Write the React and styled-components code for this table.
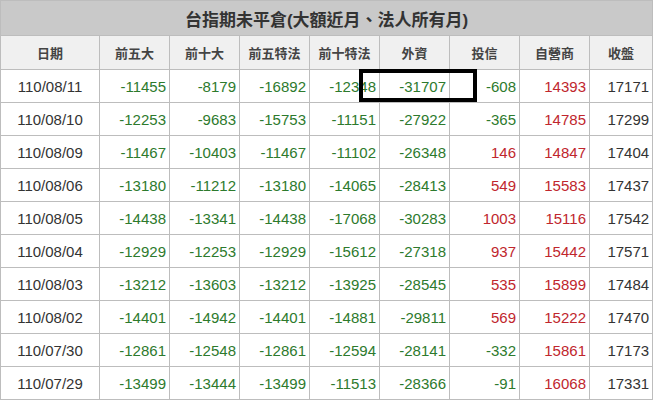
import styled, { createGlobalStyle } from "styled-components";

const GlobalStyle = createGlobalStyle`
  html, body {
    margin: 0;
    padding: 0;
    background: #ffffff;
    font-family: "Liberation Sans", "Noto Sans CJK TC", Arial, sans-serif;
  }
`;

const Wrap = styled.div`
  position: relative;
  width: 652px;
`;

const Table = styled.table`
  width: 652px;
  border-collapse: collapse;
  table-layout: fixed;
`;

const TitleCell = styled.th`
  height: 34px;
  padding: 0;
  background: #c9c9c9;
  border: 1px solid #bdbdbd;
  color: #333;
  font-size: 17px;
  font-weight: bold;
  text-align: center;
  font-family: "Liberation Sans", "Noto Sans CJK TC", sans-serif;
`;

const HeadCell = styled.th`
  height: 33px;
  padding: 0;
  background: #f0f0f0;
  border: 1px solid #bdbdbd;
  color: #444;
  font-size: 13px;
  font-weight: bold;
  text-align: center;
  font-family: "Noto Sans CJK TC", sans-serif;
`;

const Cell = styled.td`
  height: 32px;
  padding: 0 3px;
  border: 1px solid #bdbdbd;
  font-size: 15px;
  text-align: ${(p) => (p.$center ? "center" : "right")};
  color: ${(p) => p.$color || "#333"};
  white-space: nowrap;
  overflow: hidden;
`;

const Mark = styled.div`
  position: absolute;
  left: 359px;
  top: 69px;
  width: 118px;
  height: 33px;
  box-sizing: border-box;
  border: 4px solid #000;
  pointer-events: none;
`;

const widths = [99, 70, 70, 70, 70, 70, 70, 70, 63];
const heads = ["日期", "前五大", "前十大", "前五特法", "前十特法", "外資", "投信", "自營商", "收盤"];

const rows = [
  ["110/08/11", -11455, -8179, -16892, -12348, -31707, -608, 14393, 17171],
  ["110/08/10", -12253, -9683, -15753, -11151, -27922, -365, 14785, 17299],
  ["110/08/09", -11467, -10403, -11467, -11102, -26348, 146, 14847, 17404],
  ["110/08/06", -13180, -11212, -13180, -14065, -28413, 549, 15583, 17437],
  ["110/08/05", -14438, -13341, -14438, -17068, -30283, 1003, 15116, 17542],
  ["110/08/04", -12929, -12253, -12929, -15612, -27318, 937, 15442, 17571],
  ["110/08/03", -13212, -13603, -13212, -13925, -28545, 535, 15899, 17484],
  ["110/08/02", -14401, -14942, -14401, -14881, -29811, 569, 15222, 17470],
  ["110/07/30", -12861, -12548, -12861, -12594, -28141, -332, 15861, 17173],
  ["110/07/29", -13499, -13444, -13499, -11513, -28366, -91, 16068, 17331],
];

const tone = (v, i) => {
  if (i === 8) return "#333";
  return v < 0 ? "#2d7a2d" : "#c0262d";
};

export default function App() {
  return (
    <Wrap>
      <GlobalStyle />
      <Table>
        <colgroup>
          {widths.map((w, i) => (
            <col key={i} style={{ width: w }} />
          ))}
        </colgroup>
        <thead>
          <tr>
            <TitleCell colSpan={9}>台指期未平倉(大額近月、法人所有月)</TitleCell>
          </tr>
          <tr>
            {heads.map((h) => (
              <HeadCell key={h}>{h}</HeadCell>
            ))}
          </tr>
        </thead>
        <tbody>
          {rows.map((r) => (
            <tr key={r[0]}>
              <Cell $center>{r[0]}</Cell>
              {r.slice(1).map((v, i) => (
                <Cell key={i} $color={tone(v, i + 1)}>
                  {v}
                </Cell>
              ))}
            </tr>
          ))}
        </tbody>
      </Table>
      <Mark />
    </Wrap>
  );
}
